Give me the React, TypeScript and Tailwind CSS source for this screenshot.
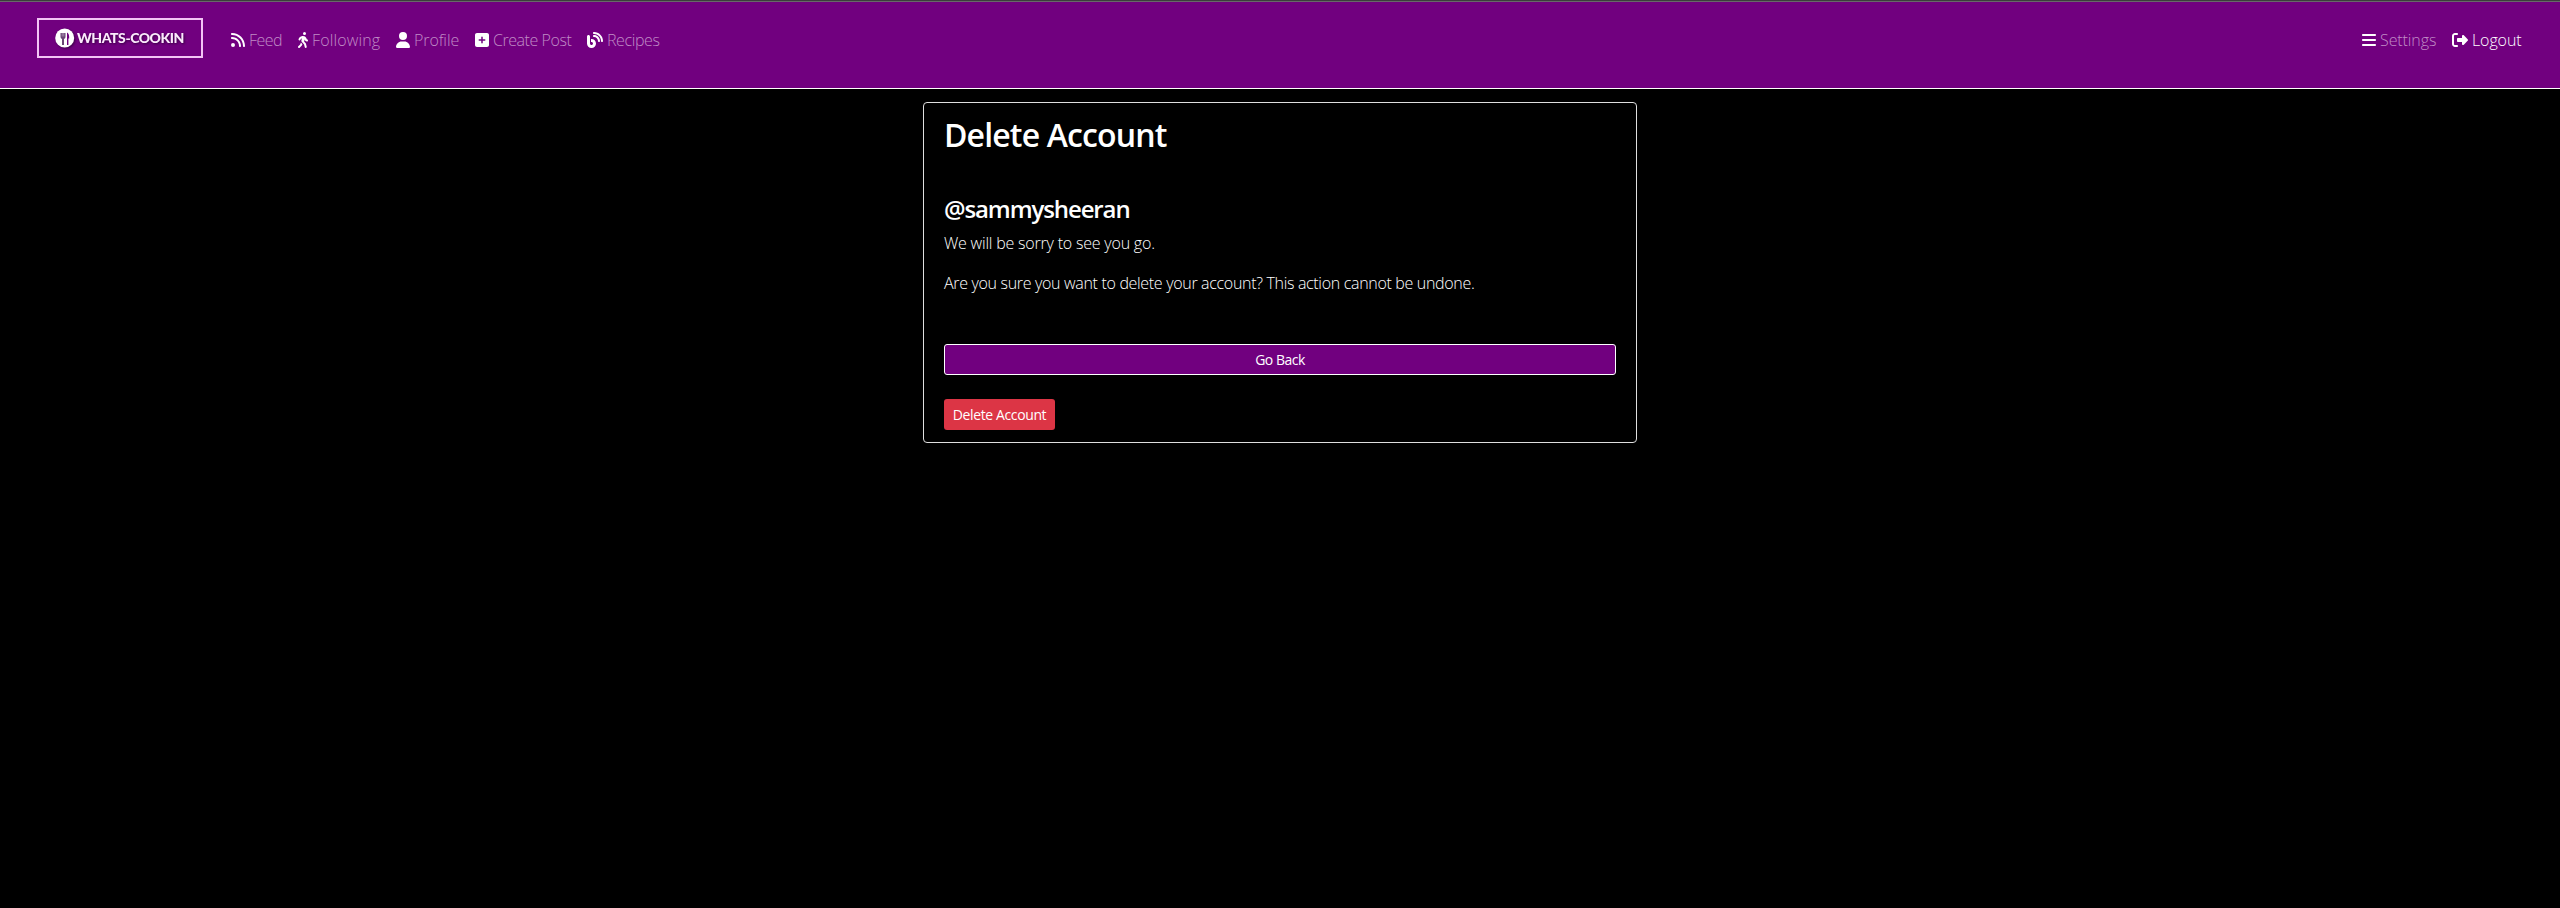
import React from 'react';
import type { IconType } from 'react-icons';
import {
  FaBars,
  FaBlog,
  FaPersonWalking,
  FaRightFromBracket,
  FaRss,
  FaSquarePlus,
  FaUser,
} from 'react-icons/fa6';

type NavItem = {
  label: string;
  Icon: IconType;
  box: string;
  iconBox: string;
  text: string;
};

const mainLinks: NavItem[] = [
  { label: 'Feed', Icon: FaRss, box: 'w-[67px]', iconBox: 'w-[14px]', text: 'text-[#c08cc6] tracking-[-0.55px]' },
  { label: 'Following', Icon: FaPersonWalking, box: 'w-[98px]', iconBox: 'w-[10px]', text: 'text-[#c08cc6] tracking-[0.15px]' },
  { label: 'Profile', Icon: FaUser, box: 'w-[79px]', iconBox: 'w-[14px]', text: 'text-[#c08cc6] tracking-[-0.1px]' },
  { label: 'Create Post', Icon: FaSquarePlus, box: 'w-[112px]', iconBox: 'w-[14px]', text: 'text-[#c08cc6] tracking-[-0.45px]' },
  { label: 'Recipes', Icon: FaBlog, box: 'w-[80px]', iconBox: 'w-[16px]', text: 'text-[#c08cc6] tracking-[-0.4px]' },
];

const accountLinks: NavItem[] = [
  { label: 'Settings', Icon: FaBars, box: 'w-[90px]', iconBox: 'w-[14px]', text: 'text-[#c08cc6] tracking-[-0.1px]' },
  { label: 'Logout', Icon: FaRightFromBracket, box: 'w-[108px]', iconBox: 'w-[16px]', text: 'text-white tracking-[-0.1px]' },
];

function NavLink({ label, Icon, box, iconBox, text }: NavItem) {
  return (
    <a href="#" className={`flex h-6 items-center gap-1 whitespace-nowrap ${box}`}>
      <span className={`flex shrink-0 justify-center text-white ${iconBox}`}>
        <Icon className="h-4 w-auto" />
      </span>
      <span className={`text-base leading-6 font-light ${text}`}>{label}</span>
    </a>
  );
}

function Logo() {
  return (
    <a
      href="#"
      className="mr-7 flex h-10 w-[166px] items-center border-2 border-[#f3c4f5] pl-4"
    >
      <svg viewBox="0 0 20 20" className="h-5 w-5 shrink-0 drop-shadow-[1px_1px_1px_#3a0045]">
        <circle cx="9.700" cy="10" r="9.500" fill="#fff" />
        <path d="M5.500 5v4q0 1.500 1.500 2v6h2v-6q1.500-.5 1.500-2V5z" fill="#6a4675" />
        <path d="M7.200 5v3.500M8.800 5v3.500" stroke="#cdb8d2" strokeWidth=".6" />
        <path d="M12 17V4.500q2.400 1.200 2.200 6h-.8V17z" fill="#71007f" />
      </svg>
      <span className="ml-[2px] font-['Lato',sans-serif] text-[14px] leading-none font-black tracking-[-0.45px] whitespace-nowrap text-[#fbeafc] drop-shadow-[1px_1px_1px_#3a0045]">
        WHATS-COOKIN
      </span>
    </a>
  );
}

export default function App() {
  return (
    <div className="min-h-[908px] bg-black font-['Open_Sans',sans-serif] text-white">
      <header className="h-[89px] border-b border-white bg-[#71007f]">
        <div className="h-[2px] border-b border-[#686868] bg-[#3c3c3c]" />
        <nav className="flex items-start justify-between pt-4 pl-[37px]">
          <div className="flex items-start">
            <Logo />
            <div className="flex pt-[10px]">
              {mainLinks.map((item) => (
                <NavLink key={item.label} {...item} />
              ))}
            </div>
          </div>
          <div className="flex pt-[10px]">
            {accountLinks.map((item) => (
              <NavLink key={item.label} {...item} />
            ))}
          </div>
        </nav>
      </header>

      <main className="mx-auto mt-[13px] flex h-[341px] w-[714px] flex-col items-start rounded border border-[#dfdfdf] px-5">
        <h1 className="mt-[13px] text-[32px] leading-[38px] font-semibold tracking-[-0.85px]">
          Delete Account
        </h1>
        <h2 className="mt-10 text-2xl leading-[29px] font-semibold tracking-[-1.1px]">
          @sammysheeran
        </h2>
        <p className="mt-2 text-base leading-6 font-light tracking-[-0.2px]">
          We will be sorry to see you go.
        </p>
        <p className="mt-4 text-base leading-6 font-light tracking-[-0.32px]">
          Are you sure you want to delete your account? This action cannot be undone.
        </p>
        <button className="mt-[49px] h-[31px] w-full rounded-[3px] border border-white bg-[#71007f] text-sm leading-[21px] tracking-[-0.5px]">
          Go Back
        </button>
        <button className="mt-6 h-[31px] w-[111px] rounded-[3px] bg-[#dc3545] text-sm leading-[21px] tracking-[-0.38px] whitespace-nowrap">
          Delete Account
        </button>
      </main>
    </div>
  );
}
